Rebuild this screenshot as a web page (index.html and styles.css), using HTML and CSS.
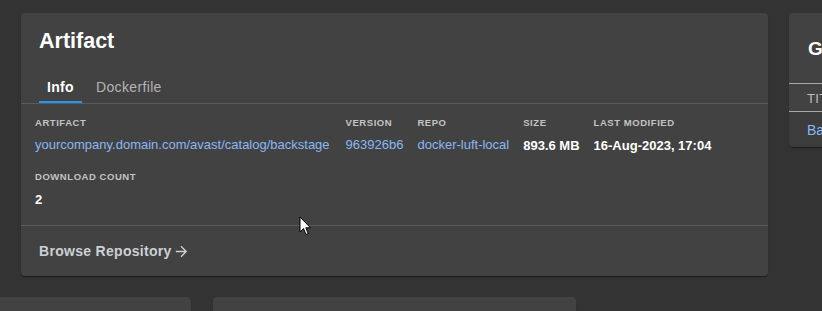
FILE: index.html
```html
<!DOCTYPE html>
<html lang="en">
<head>
<meta charset="utf-8">
<title>Artifact</title>
<link rel="stylesheet" href="styles.css">
</head>
<body>
<div class="page">
  <div class="top-row">
    <section class="card artifact-card">
      <header class="card-header">
        <h2 class="card-title">Artifact</h2>
      </header>
      <nav class="tabs">
        <span class="tab tab-active">Info</span>
        <span class="tab">Dockerfile</span>
      </nav>
      <div class="card-content">
        <div class="meta-row">
          <div class="meta-item first">
            <div class="meta-label">Artifact</div>
            <a class="meta-value link">yourcompany.domain.com/avast/catalog/backstage</a>
          </div>
          <div class="meta-item">
            <div class="meta-label">Version</div>
            <a class="meta-value link">963926b6</a>
          </div>
          <div class="meta-item">
            <div class="meta-label">Repo</div>
            <a class="meta-value link">docker-luft-local</a>
          </div>
          <div class="meta-item">
            <div class="meta-label">Size</div>
            <span class="meta-value strong">893.6 MB</span>
          </div>
          <div class="meta-item">
            <div class="meta-label">Last Modified</div>
            <span class="meta-value strong">16-Aug-2023, 17:04</span>
          </div>
        </div>
        <div class="meta-row second">
          <div class="meta-item">
            <div class="meta-label">Download Count</div>
            <span class="meta-value strong">2</span>
          </div>
        </div>
      </div>
      <footer class="card-footer">
        <a class="browse">Browse Repository
          <svg class="arrow" width="17" height="17" viewBox="0 0 24 24" aria-hidden="true"><path d="M12 4l-1.41 1.41L16.17 11H4v2h12.17l-5.58 5.59L12 20l8-8z" fill="currentColor"/></svg>
        </a>
      </footer>
    </section>
    <section class="card side-card">
      <header class="side-header">
        <h2 class="side-title">G</h2>
      </header>
      <div class="side-th">TITLE</div>
      <div class="side-td"><a class="link">Backstage</a></div>
    </section>
  </div>
  <div class="bottom-row">
    <div class="card small-card a"></div>
    <div class="card small-card b"></div>
  </div>
  <svg class="cursor" width="13" height="21" viewBox="0 0 13 21" aria-hidden="true">
    <path d="M1 1 L1 16 L4.5 12.5 L7 18.5 L9.2 17.6 L6.8 11.8 L11.5 11.8 Z" fill="#fff" stroke="#000" stroke-width="1" stroke-linejoin="miter"/>
  </svg>
</div>
</body>
</html>
```

FILE: styles.css
```css
* { box-sizing: border-box; }

html, body {
  margin: 0;
  padding: 0;
  background: #333333;
  font-family: "Liberation Sans", Arial, sans-serif;
  color: #ffffff;
  overflow: hidden;
}

.page {
  position: relative;
  width: 822px;
  height: 311px;
  overflow: hidden;
}

.top-row {
  display: flex;
  gap: 21px;
  padding: 13px 0 0 21px;
}

.card {
  background: #424242;
  border-radius: 4px;
  box-shadow: 0 1px 1px rgba(0,0,0,0.35), 0 2px 1px -1px rgba(0,0,0,0.2);
}

.artifact-card {
  width: 747px;
  height: 263px;
  flex: none;
  display: flex;
  flex-direction: column;
}

.card-header {
  padding: 16px 18px 0 18px;
}

.card-title {
  margin: 0;
  font-size: 21.5px;
  font-weight: 700;
  line-height: 24px;
  color: #ffffff;
}

.tabs {
  display: flex;
  margin-top: 18px;
  padding-left: 18px;
  height: 33px;
  border-bottom: 1px solid #5a5a5a;
}

.tab {
  display: flex;
  align-items: center;
  justify-content: center;
  height: 32px;
  padding: 0 8px;
  font-size: 14px;
  letter-spacing: 0.35px;
  color: #b4b4b4;
}

.tab-active {
  color: #ffffff;
  font-weight: 700;
  width: 43px;
  padding: 2px 0 0 0;
  border-bottom: 2px solid #2196f3;
  margin-right: 6px;
}

.card-content {
  padding: 11px 14px 15px 14px;
  border-bottom: 1px solid #5a5a5a;
}

.meta-row {
  display: flex;
  gap: 14px;
}

.meta-item.first {
  margin-right: 2px;
}

.meta-row.second {
  margin-top: 13px;
}

.meta-label {
  font-size: 9.5px;
  font-weight: 700;
  letter-spacing: 0.55px;
  line-height: 16px;
  text-transform: uppercase;
  color: #c4c4c4;
}

.meta-value {
  display: block;
  margin-top: 5px;
  font-size: 13px;
  line-height: 20px;
}

.link {
  color: #8ab8f2;
  text-decoration: none;
}

.meta-value.link {
  line-height: 18px;
}

.strong {
  font-weight: 700;
  color: #ffffff;
}

.card-footer {
  flex: 1;
  display: flex;
  align-items: center;
  padding: 0 18px;
}

.browse {
  display: inline-flex;
  align-items: center;
  font-size: 14px;
  font-weight: 700;
  letter-spacing: 0.3px;
  color: #cdd0d4;
  text-decoration: none;
}

.arrow {
  margin-left: 1px;
  color: #cdd0d4;
}

.side-card {
  width: 200px;
  height: 134px;
  flex: none;
  display: flex;
  flex-direction: column;
  overflow: hidden;
}

.side-header {
  height: 71px;
  padding: 25px 19px 0 19px;
  border-bottom: 1px solid #a8a8a8;
}

.side-title {
  margin: 0;
  font-size: 19px;
  font-weight: 700;
  line-height: 22px;
  color: #ffffff;
}

.side-th {
  height: 28px;
  display: flex;
  align-items: center;
  padding: 1px 0 0 18px;
  font-size: 13px;
  color: #bdbdbd;
  letter-spacing: 0.3px;
  border-bottom: 1px solid #a8a8a8;
}

.side-td {
  flex: 1;
  padding: 10px 18px 0 18px;
  font-size: 14px;
  background: #3c3c3c;
}

.bottom-row {
  display: flex;
  gap: 22px;
  margin-top: 21px;
}

.small-card {
  height: 40px;
  flex: none;
}

.small-card.a { width: 191px; border-top-left-radius: 0; }
.small-card.b { width: 363px; }

.cursor {
  position: absolute;
  left: 299px;
  top: 216px;
}
```
